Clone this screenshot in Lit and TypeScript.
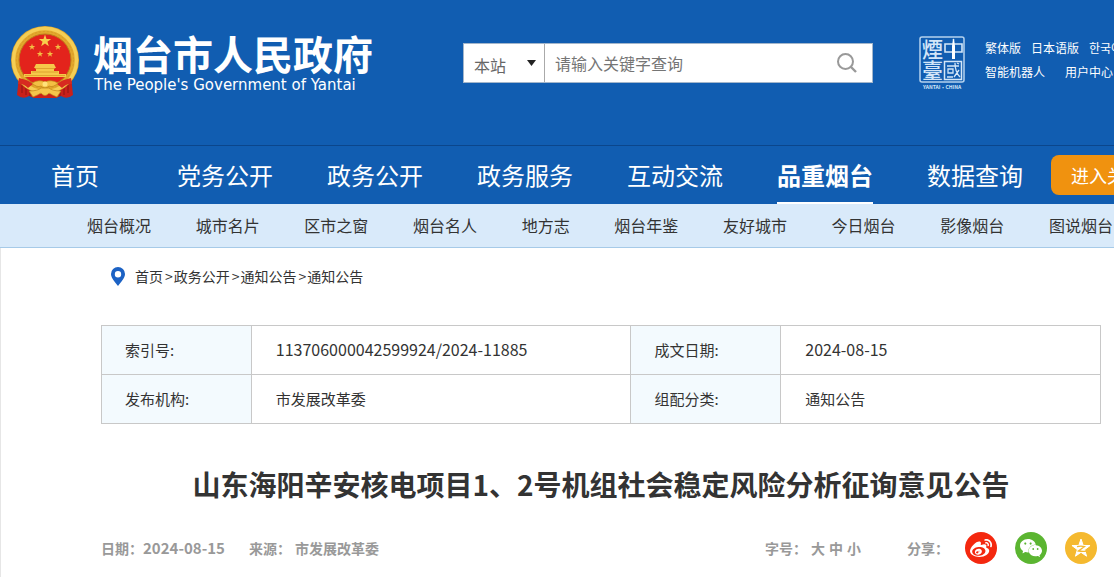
import { LitElement, html, css, svg } from "lit";
import { customElement, property } from "lit/decorators.js";

const base = css`
  * { box-sizing: border-box; margin: 0; padding: 0; }
  a { color: inherit; text-decoration: none; }
  ul, ol { list-style: none; }
  svg { display: block; }
`;

const star = (cx: number, cy: number, r: number) => {
  const pts: string[] = [];
  for (let i = 0; i < 10; i++) {
    const k = i % 2 ? r * 0.4 : r;
    const a = -Math.PI / 2 + (i * Math.PI) / 5;
    pts.push(`${(cx + k * Math.cos(a)).toFixed(2)},${(cy + k * Math.sin(a)).toFixed(2)}`);
  }
  return pts.join(" ");
};

@customElement("site-header")
class SiteHeader extends LitElement {
  static styles = [base, css`
    :host { display: block; background: #115db1; color: #fff; overflow: hidden; }
    .bar { display: flex; align-items: center; padding: 26px 0 45px 10px; white-space: nowrap; }
    .bar > * { flex: none; }
    .brand { display: flex; align-items: center; gap: 13px; margin-right: 90px; }
    .name { display: block; font-size: 40px; font-weight: 700; line-height: 44px; }
    .en { display: block; font: 15px/20px "DejaVu Sans", sans-serif; padding-left: 1px; }
    .search { display: flex; width: 410px; height: 40px; background: #fff; border: 1px solid #a3b6cb; margin-right: 46px; }
    .scope { display: grid; align-items: center; width: 81px; border-right: 1px solid #aaa; }
    .scope > * { grid-area: 1 / 1; }
    .scope select { appearance: none; width: 100%; height: 100%; border: 0; background: none; color: #666; font: inherit; font-size: 16px; padding: 4px 24px 0 10px; outline: 0; }
    .scope svg { justify-self: end; margin-right: 8px; pointer-events: none; }
    .search input { flex: 1; min-width: 0; border: 0; outline: 0; background: none; font: inherit; font-size: 16px; padding-left: 10px; color: #666; }
    .search input::placeholder { color: #757575; opacity: 1; }
    .search button { width: 50px; border: 0; background: none; display: grid; place-items: center; cursor: pointer; }
    .seal { margin-right: 20px; }
    .seal text { font-family: "Noto Sans CJK TC", sans-serif; }
    .links { font-size: 12px; line-height: 24px; padding-bottom: 6px; }
    .row { display: flex; gap: 10px; }
    .row.wide { gap: 20px; }
  `];

  render() {
    return html`
      <div class="bar">
        <a class="brand" href="#">
          <svg width="70" height="74" viewBox="0 0 70 74" aria-hidden="true">
            <path d="M9 50 L61 50 L63 69 Q57 74 51 70 L46 72 L24 72 L19 70 Q13 74 7 69Z" fill="#c9201a"/>
            <path d="M16 56v13M20 60v10M54 56v13M50 60v10M12 58v9M58 58v9" stroke="#8f1512" stroke-width="1"/>
            <circle cx="35" cy="34" r="34" fill="#e2a72c"/>
            <circle cx="35" cy="34" r="31.500" fill="none" stroke="#f5ce55" stroke-width="3.500"/>
            <circle cx="35" cy="34" r="28.500" fill="none" stroke="#d79c28" stroke-width="1" stroke-dasharray="2 2"/>
            <circle cx="35" cy="34" r="26" fill="#e3231c" stroke="#bd7c1a"/>
            <polygon points=${star(35, 15, 6.5)} fill="#f8ce4c"/>
            ${[[22, 21], [48, 21], [30, 28], [40, 28]].map(([x, y]) => svg`<polygon points=${star(x, y, 3.4)} fill="#f3bd43"/>`)}
            <path d="M26 38h18l2 4H24zM26 42h18v3H26zM21 45h28v3H21zM14 48h42v3H14z" fill="#f6c84a"/>
            <path d="M25 42.500h20M22 46h26M15 49.500h40" stroke="#d99b28" stroke-width=".8"/>
            <path d="M9 52q10 2 14 6l-5 4q-6-5-10-4zM61 52q-10 2-14 6l5 4q6-5 10-4z" fill="#d72a20"/>
            <path d="M22 57q7-4 13-1q6-3 13 1q-5 5-9 3q-4 4-8 0q-4 2-9-3z" fill="#f3c044" stroke="#bf8419" stroke-width=".7"/>
            <path d="M19 65q9 0 12-3h8q3 3 12 3l-4 6q-5-2-8-4q-4 5-8 0q-3 2-8 4z" fill="#f5c64b" stroke="#bf8419" stroke-width=".7"/>
            <circle cx="35" cy="58" r="2.500" fill="#ffe27a"/>
          </svg>
          <span>
            <span class="name">烟台市人民政府</span>
            <span class="en">The People's Government of Yantai</span>
          </span>
        </a>

        <form class="search" role="search" @submit=${(e: Event) => e.preventDefault()}>
          <span class="scope">
            <select aria-label="搜索范围"><option>本站</option></select>
            <svg width="9" height="6" viewBox="0 0 9 6" aria-hidden="true"><path d="M0 0h9L4.500 6z" fill="#222"/></svg>
          </span>
          <input type="text" aria-label="关键字" placeholder="请输入关键字查询">
          <button type="submit" aria-label="搜索">
            <svg width="20" height="20" viewBox="0 0 20 20" fill="none" stroke="#999" stroke-width="2"><circle cx="8.500" cy="8.500" r="7.500"/><path d="M14 14l5 5" stroke-width="2.400"/></svg>
          </button>
        </form>

        <svg class="seal" width="46" height="54" viewBox="0 0 46 54" fill="#d3e6f8" role="img" aria-label="烟台中国">
          <rect x="1" y="1" width="44" height="45" rx="2" fill="none" stroke="#b5d2ee" stroke-width="1.500"/>
          <rect x="25.500" y="25.500" width="17" height="18" fill="none" stroke="#d3e6f8" stroke-width="1.500"/>
          <text x="3" y="21" font-size="21" font-weight="500">煙</text>
          <text x="3" y="42" font-size="21" font-weight="500">臺</text>
          <path d="M26 8h17v8H26zM34.500 3v20" fill="none" stroke="#d3e6f8" stroke-width="1.600"/>
          <path d="M33 10l1.500-8 1.500 8v13h-3z" fill="#fff"/>
          <path d="M28 30h12M29 33h5v4h-5zM28 41h6M36 27q0 9 5 14M40 34l-5 7M38 27l2 1" fill="none" stroke="#d3e6f8" stroke-width="1.300"/>
          <text x="23" y="53" font-size="5" font-weight="700" text-anchor="middle">YANTAI·CHINA</text>
        </svg>

        <div class="links">
          <div class="row"><a href="#">繁体版</a><a href="#">日本语版</a><a href="#">한국어판</a></div>
          <div class="row wide"><a href="#">智能机器人</a><a href="#">用户中心</a></div>
        </div>
      </div>`;
  }
}

@customElement("site-nav")
class SiteNav extends LitElement {
  @property({ type: Array }) items = ["首页", "党务公开", "政务公开", "政务服务", "互动交流", "品重烟台", "数据查询"];
  @property({ type: Array }) subs = ["烟台概况", "城市名片", "区市之窗", "烟台名人", "地方志", "烟台年鉴", "友好城市", "今日烟台", "影像烟台", "图说烟台"];
  @property() active = "品重烟台";

  static styles = [base, css`
    :host { display: block; overflow: hidden; white-space: nowrap; }
    .main { display: flex; align-items: center; height: 59px; background: #115db1; border-top: 1px solid #0b468c; color: #fff; }
    .main ul { display: flex; flex: none; height: 100%; }
    .main li { width: 150px; text-align: center; }
    .main li a { display: inline-block; height: 100%; font-size: 24px; line-height: 58px; }
    .main a.on { font-weight: 700; border-bottom: 2px solid #fff; }
    .care { flex: none; height: 40px; padding: 0 20px; border: 0; border-radius: 8px; background: #f0920f; color: #fff; font: inherit; font-size: 18px; margin-left: 1px; }
    .sub { display: flex; justify-content: space-between; height: 44px; padding: 0 1px 0 87px; background: #d9eafa; border-bottom: 1px solid #a6cae8; font-size: 16px; line-height: 43px; color: #333; }
  `];

  render() {
    return html`
      <nav>
        <div class="main">
          <ul>${this.items.map((t) => html`<li><a href="#" class=${t === this.active ? "on" : ""}>${t}</a></li>`)}</ul>
          <button class="care" type="button">进入关怀版</button>
        </div>
        <ul class="sub">${this.subs.map((t) => html`<li><a href="#">${t}</a></li>`)}</ul>
      </nav>`;
  }
}

@customElement("notice-article")
class NoticeArticle extends LitElement {
  static styles = [base, css`
    :host { display: block; padding: 15px 13px 13px 100px; border-left: 1px solid #e6e6e6; color: #333; }
    .crumbs { display: flex; align-items: center; font-size: 14px; line-height: 26px; padding-left: 10px; }
    .crumbs svg { margin-right: 10px; }
    .crumbs li { display: flex; }
    .crumbs li + li::before { content: ">"; margin: 0 1px 0 2px; }
    .crumbs ol { display: flex; }
    table { width: 100%; margin-top: 36px; border-collapse: collapse; table-layout: fixed; font-size: 15px; }
    th, td { height: 49px; border: 1px solid #c8c8c8; padding: 0 24px 2px; font-weight: 400; text-align: left; }
    th { background: #f3fafe; padding-left: 23px; }
    .c1 { width: 15%; }
    .c2 { width: 38%; }
    .num { font-size: 16px; }
    h1 { margin-top: 38px; font-size: 28px; line-height: 44px; font-weight: 700; text-align: center; }
    .meta { display: flex; align-items: center; margin-top: 26px; font-size: 14px; line-height: 32px; font-weight: 700; color: #999; }
    .date { font-size: 15px; }
    .source { margin-left: 24px; }
    .source span { margin-left: 4px; }
    .sizes { display: flex; align-items: center; gap: 4px; margin-left: auto; }
    .sizes button { border: 0; background: none; font: inherit; color: inherit; cursor: pointer; }
    .share { display: flex; align-items: center; gap: 18px; margin-left: 46px; padding-right: 4px; }
    .share a { display: grid; place-items: center; width: 32px; height: 32px; border-radius: 50%; }
    .share span { margin-right: -2px; }
    .weibo { background: #f4280f; }
    .wechat { background: #5bb531; }
    .qzone { background: #f5b92f; }
  `];

  render() {
    return html`
      <nav class="crumbs" aria-label="当前位置">
        <svg width="14" height="19" viewBox="0 0 14 19" aria-hidden="true"><path fill="#1c62c4" fill-rule="evenodd" d="M7 0a7 7 0 0 1 7 7c0 4-4 8-7 12C4 15 0 11 0 7a7 7 0 0 1 7-7zm0 4a3.200 3.200 0 1 0 0 6.400A3.200 3.200 0 0 0 7 4z"/></svg>
        <ol>${["首页", "政务公开", "通知公告", "通知公告"].map((t) => html`<li><a href="#">${t}</a></li>`)}</ol>
      </nav>

      <table>
        <colgroup><col class="c1"><col class="c2"><col class="c1"><col></colgroup>
        <tr><th scope="row">索引号:</th><td class="num">113706000042599924/2024-11885</td><th scope="row">成文日期:</th><td class="num">2024-08-15</td></tr>
        <tr><th scope="row">发布机构:</th><td>市发展改革委</td><th scope="row">组配分类:</th><td>通知公告</td></tr>
      </table>

      <h1>山东海阳辛安核电项目1、2号机组社会稳定风险分析征询意见公告</h1>

      <div class="meta">
        <span>日期：</span><time class="date">2024-08-15</time>
        <div class="source">来源：<span>市发展改革委</span></div>
        <div class="sizes"><span>字号：</span><button type="button">大</button><button type="button">中</button><button type="button">小</button></div>
        <div class="share">
          <span>分享：</span>
          <a class="weibo" href="#" aria-label="微博"><svg width="22" height="22" viewBox="0 0 24 24" fill="#fff"><path d="M10.098 20.323c-3.977.391-7.414-1.406-7.672-4.020-.259-2.609 2.759-5.047 6.740-5.441 3.979-.394 7.413 1.404 7.671 4.018.259 2.600-2.759 5.049-6.737 5.439l-.002.004zM9.050 17.219c-.384.616-1.208.884-1.829.602-.612-.279-.793-.991-.406-1.593.379-.595 1.176-.861 1.793-.601.622.263.820.972.442 1.592zm1.270-1.627c-.141.237-.449.353-.689.253-.236-.090-.313-.361-.177-.586.138-.227.436-.346.672-.240.239.090.315.360.180.601l.014-.028zm.176-2.719c-1.893-.493-4.033.450-4.857 2.118-.836 1.704-.026 3.591 1.886 4.210 1.983.640 4.318-.341 5.132-2.179.800-1.793-.201-3.642-2.161-4.149zm7.563-1.224c-.346-.105-.570-.180-.405-.615.375-.977.420-1.804 0-2.404-.781-1.112-2.915-1.053-5.364-.030 0 0-.766.331-.571-.271.376-1.217.315-2.224-.270-2.809-1.338-1.337-4.869.045-7.888 3.080C1.309 10.870 0 13.273 0 15.348c0 3.981 5.099 6.395 10.086 6.395 6.536 0 10.888-3.801 10.888-6.820 0-1.822-1.547-2.854-2.915-3.284v.010zm1.908-5.092c-.766-.856-1.908-1.187-2.960-.962-.436.090-.706.511-.616.932.090.420.511.691.932.602.511-.105 1.067.044 1.442.465.376.421.466.977.316 1.473-.136.406.089.856.510.992.405.119.857-.105.992-.512.330-1.021.120-2.178-.646-3.035l.030.045zm2.418-2.195c-1.576-1.757-3.905-2.419-6.054-1.968-.496.104-.812.587-.706 1.081.104.496.586.813 1.082.707 1.532-.331 3.185.150 4.296 1.383 1.112 1.246 1.429 2.943.947 4.416-.165.480.106 1.007.586 1.157.479.165.991-.104 1.157-.586.675-2.088.241-4.478-1.338-6.235l.030.045z"/></svg></a>
          <a class="wechat" href="#" aria-label="微信"><svg width="22" height="22" viewBox="0 0 24 24" fill="#fff"><path d="M8.691 2.188C3.891 2.188 0 5.476 0 9.530c0 2.212 1.170 4.203 3.002 5.550a.590.590 0 0 1 .213.665l-.390 1.480c-.019.070-.048.141-.048.213 0 .163.130.295.290.295a.326.326 0 0 0 .167-.054l1.903-1.114a.864.864 0 0 1 .717-.098 10.160 10.160 0 0 0 2.837.403c.276 0 .543-.027.811-.050-.857-2.578.157-4.972 1.932-6.446 1.703-1.415 3.882-1.980 5.853-1.838-.576-3.583-4.196-6.348-8.596-6.348zM5.785 5.991c.642 0 1.162.529 1.162 1.180a1.170 1.170 0 0 1-1.162 1.178A1.170 1.170 0 0 1 4.623 7.170c0-.651.520-1.180 1.162-1.180zm5.813 0c.642 0 1.162.529 1.162 1.180a1.170 1.170 0 0 1-1.162 1.178 1.170 1.170 0 0 1-1.162-1.178c0-.651.520-1.180 1.162-1.180zm5.340 2.867c-1.797-.052-3.746.512-5.280 1.786-1.720 1.428-2.687 3.720-1.780 6.220.942 2.453 3.666 4.229 6.884 4.229.826 0 1.622-.120 2.361-.336a.722.722 0 0 1 .598.082l1.584.926a.272.272 0 0 0 .140.047c.134 0 .240-.111.240-.247 0-.060-.023-.120-.038-.177l-.327-1.233a.582.582 0 0 1-.023-.156.490.490 0 0 1 .201-.398C23.024 18.480 24 16.820 24 14.980c0-3.210-2.931-5.837-6.656-6.088V8.890c-.135-.010-.270-.027-.407-.030zm-2.530 3.274c.535 0 .969.440.969.982a.976.976 0 0 1-.969.983.976.976 0 0 1-.969-.983c0-.542.434-.982.970-.982zm4.844 0c.535 0 .969.440.969.982a.976.976 0 0 1-.969.983.976.976 0 0 1-.969-.983c0-.542.434-.982.969-.982z"/></svg></a>
          <a class="qzone" href="#" aria-label="QQ空间"><svg width="20" height="20" viewBox="0 0 20 20"><polygon points=${star(10, 10.5, 9.5)} fill="#fff" stroke="#fff" stroke-linejoin="round"/><path d="M6 8.600q4-.8 7.500 0L7.500 13q4 .8 8 .2" fill="none" stroke="#f5b92f" stroke-width="1.300"/></svg></a>
        </div>
      </div>`;
  }
}

@customElement("app-root")
class AppRoot extends LitElement {
  static styles = css`
    :host { display: block; background: #fff; font-family: "Noto Sans CJK SC", sans-serif; }
  `;
  render() {
    return html`<site-header></site-header><site-nav></site-nav><main><notice-article></notice-article></main>`;
  }
}
